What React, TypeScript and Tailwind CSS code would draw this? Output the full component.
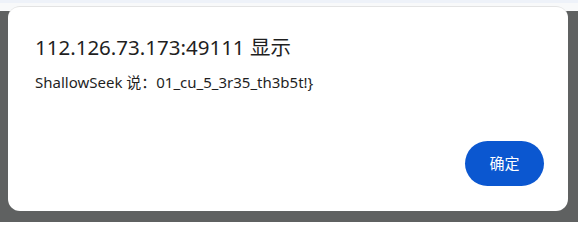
export default function App() {
  return (
    <div
      className="w-[578px] h-[222px] overflow-hidden bg-[linear-gradient(to_bottom,#eef2f9_0px,#eef2f9_3px,#f8f9fa_3px,#f8f9fa_11px,#5f6161_11px)] pt-[6px] pl-[8px]"
      style={{ fontFamily: '"Noto Sans", "Noto Sans CJK SC", sans-serif' }}
    >
      <div className="w-[560px] h-[205px] rounded-[12px] bg-white border-t border-[#e3e3e3] flex flex-col pl-[27px] pr-[24px] pt-[27px] pb-[25px]">
        <h1 className="text-[20.5px] leading-[27px] text-[#1f1f1f]">112.126.73.173:49111 显示</h1>
        <p className="mt-[11px] text-[15px] leading-[20px] text-[#1f1f1f]">{'ShallowSeek 说：01_cu_5_3r35_th3b5t!}'}</p>
        <div className="mt-auto flex justify-end">
          <button
            type="button"
            className="w-[79px] h-[45px] rounded-full bg-[#0b57d0] text-white text-[15px]"
          >
            确定
          </button>
        </div>
      </div>
    </div>
  );
}
